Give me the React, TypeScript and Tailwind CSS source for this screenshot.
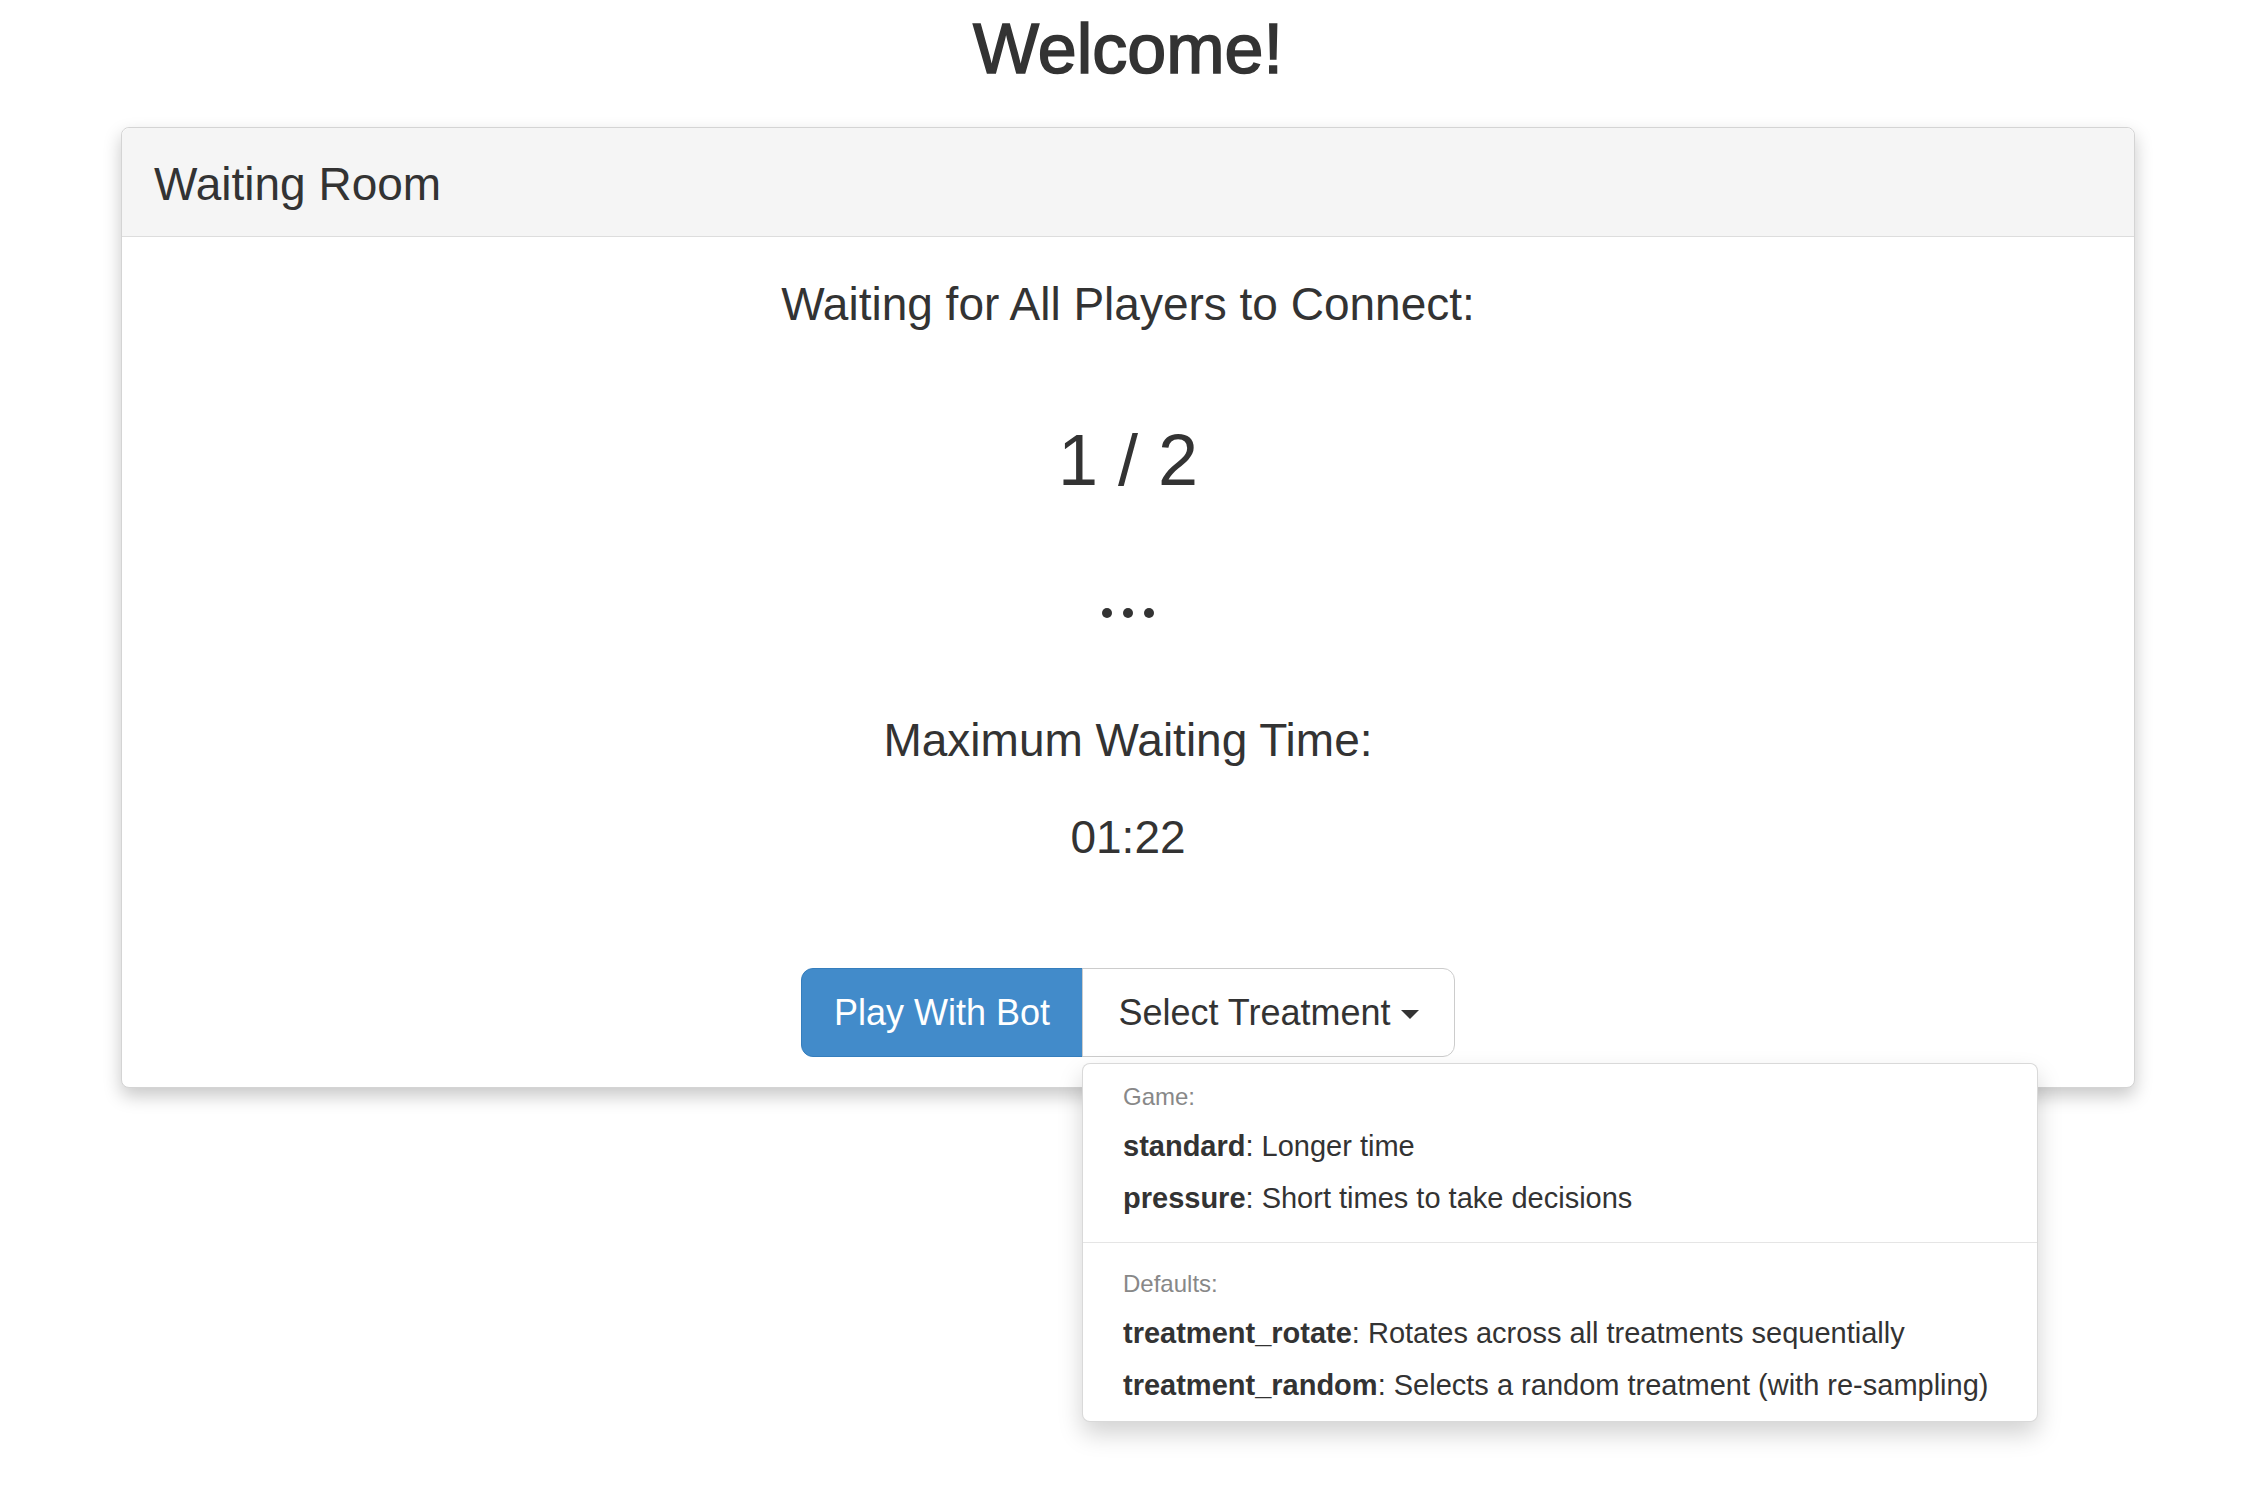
const items = [
  { header: "Game:", rows: [
    { key: "standard", desc: "Longer time" },
    { key: "pressure", desc: "Short times to take decisions" },
  ] },
  { header: "Defaults:", rows: [
    { key: "treatment_rotate", desc: "Rotates across all treatments sequentially" },
    { key: "treatment_random", desc: "Selects a random treatment (with re-sampling)" },
  ] },
];

const TreatmentMenu = () => {
  return (
    <div className="absolute left-0 top-[95px] z-10 w-[956px] whitespace-nowrap rounded-[8px] border border-[rgba(0,0,0,0.15)] bg-white py-[10px] text-left shadow-[0_12px_24px_rgba(0,0,0,0.175)]">
      {items.map((group, i) => (
        <div key={group.header}>
          {i > 0 && <div className="my-[18px] h-px bg-[#e5e5e5]" />}
          <div className="px-[40px] py-[6px] text-[24px] leading-[34px] text-[#888]">
            {group.header}
          </div>
          {group.rows.map((row) => (
            <div
              key={row.key}
              className="px-[40px] py-[6px] text-[29px] leading-[40px] text-[#333]"
            >
              <span className="font-bold">{row.key}</span>: {row.desc}
            </div>
          ))}
        </div>
      ))}
    </div>
  );
};

export default function App() {
  return (
    <div className="min-h-screen bg-white font-['Liberation_Sans',Arial,sans-serif] text-[#333]">
      <div className="ml-[121px] w-[2014px]">
        <h1 className="pt-[11px] text-center text-[70px] font-medium leading-[77px] [-webkit-text-stroke:1.6px_#333]">
          Welcome!
        </h1>

        <div className="mt-[39px] rounded-[8px] border border-[#d4d4d4] bg-white shadow-[0_8px_18px_rgba(0,0,0,0.22)]">
          <div className="h-[109px] rounded-t-[8px] border-b border-[#ddd] bg-[#f5f5f5] px-[32px] text-[46px] leading-[112px]">
            Waiting Room
          </div>

          <div className="flex flex-col items-center pb-[30px] pt-[37px] text-center">
            <div className="text-[46px] leading-[60px]">
              Waiting for All Players to Connect:
            </div>
            <div className="mt-[86px] text-[72px] leading-[80px]">1 / 2</div>
            <div className="mt-[108px] flex h-[10px] items-center gap-[11px]">
              <span className="h-[10px] w-[10px] rounded-full bg-[#333]" />
              <span className="h-[10px] w-[10px] rounded-full bg-[#333]" />
              <span className="h-[10px] w-[10px] rounded-full bg-[#333]" />
            </div>
            <div className="mt-[92px] text-[46px] leading-[60px]">
              Maximum Waiting Time:
            </div>
            <div className="mt-[37px] text-[46px] leading-[60px]">01:22</div>

            <div className="mt-[101px] flex">
              <button className="h-[89px] w-[282px] rounded-l-[12px] border border-[#357ebd] bg-[#428bca] text-[36px] text-white">
                Play With Bot
              </button>
              <div className="relative -ml-px">
                <button className="flex h-[89px] w-[373px] items-center justify-center gap-[10px] rounded-r-[12px] border border-[#ccc] bg-white text-[36px] text-[#333]">
                  Select Treatment
                  <span className="mt-[4px] h-0 w-0 border-l-[9px] border-r-[9px] border-t-[9px] border-l-transparent border-r-transparent border-t-[#333]" />
                </button>
                <TreatmentMenu />
              </div>
            </div>
          </div>
        </div>
      </div>
    </div>
  );
}
